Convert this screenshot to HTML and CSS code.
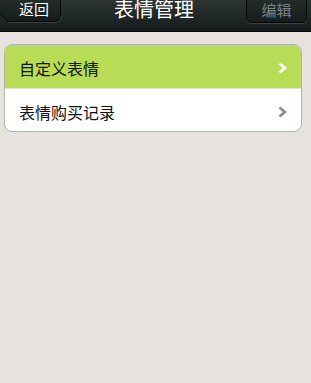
FILE: index.html
```html
<!DOCTYPE html>
<html lang="zh">
<head>
<meta charset="utf-8">
<title>表情管理</title>
<link rel="stylesheet" href="styles.css">
</head>
<body>
<header class="topbar">
  <div class="back">
    <svg class="back-shape" width="72" height="32" viewBox="0 0 72 32">
      <defs>
        <linearGradient id="bg" x1="0" y1="0" x2="0" y2="1">
          <stop offset="0" stop-color="#2a3332"/>
          <stop offset="1" stop-color="#161c1c"/>
        </linearGradient>
      </defs>
      <path d="M2.5 15.5 L18 0.5 H65 Q70.5 0.5 70.5 6 V25 Q70.5 30.5 65 30.5 H18 Z" fill="url(#bg)" stroke="#050707" stroke-width="1"/>
      <path d="M18.5 31.5 H65 Q71.5 31.5 71.5 25" fill="none" stroke="#3a4443" stroke-width="1"/>
    </svg>
    <span class="back-label">返回</span>
  </div>
  <h1 class="title">表情管理</h1>
  <div class="edit">编辑</div>
</header>
<main class="content">
  <ul class="group">
    <li class="row row-active">
      <span class="row-label">自定义表情</span>
      <svg class="chev" width="9" height="12" viewBox="0 0 9 12"><path d="M1.5 1.5 L6.8 6 L1.5 10.5" fill="none" stroke="#ffffff" stroke-width="2.8"/></svg>
    </li>
    <li class="row">
      <span class="row-label">表情购买记录</span>
      <svg class="chev" width="9" height="12" viewBox="0 0 9 12"><path d="M1.5 1.5 L6.8 6 L1.5 10.5" fill="none" stroke="#8c8c8c" stroke-width="2.8"/></svg>
    </li>
  </ul>
</main>
</body>
</html>
```
FILE: styles.css
```css
html, body {
  margin: 0;
  padding: 0;
}
body {
  background: #e6e3de;
  font-family: "Noto Sans CJK SC", "Noto Sans", sans-serif;
  width: 311px;
  height: 383px;
  overflow: hidden;
}
.topbar {
  height: 31px;
  border-bottom: 1px solid #060808;
  background: linear-gradient(#2c3534, #151b1b);
  display: flex;
  align-items: flex-start;
  overflow: hidden;
}
.back {
  position: relative;
  width: 62px;
  height: 31px;
  margin-left: -10px;
  flex: none;
}
.back-shape {
  position: absolute;
  left: 0;
  top: -9px;
}
.back-label {
  position: absolute;
  left: 29px;
  top: 1px;
  font-size: 15px;
  line-height: 16px;
  color: #ffffff;
}
.title {
  flex: 1;
  margin: -1px 0 0 10px;
  font-size: 20px;
  line-height: 20px;
  font-weight: normal;
  color: #ffffff;
  text-align: center;
}
.edit {
  flex: none;
  width: 61px;
  height: 31px;
  margin: -8px 4px 0 0;
  box-sizing: border-box;
  border: 1px solid #050707;
  border-radius: 5px;
  box-shadow: 0 1px 0 #3a4443;
  background: linear-gradient(#283130, #171d1d);
  color: #7c8583;
  font-size: 15px;
  line-height: 16px;
  padding-top: 9px;
  text-align: center;
}
.content {
  padding: 12px 9px 0 4px;
}
.group {
  list-style: none;
  margin: 0;
  padding: 0;
  border: 1px solid #b3b3b0;
  border-radius: 8px;
  background: #ffffff;
  overflow: hidden;
}
.row {
  height: 43px;
  display: flex;
  align-items: center;
  justify-content: space-between;
  padding: 0 14px 0 14px;
  box-sizing: border-box;
}
.row + .row {
  border-top: 1px solid #e2e2e2;
}
.row-active {
  background: #b8dc55;
}
.row-label {
  font-size: 16px;
  line-height: 18px;
  color: #111111;
  padding-top: 3px;
}
.chev {
  display: block;
  margin-top: 3px;
}
```
